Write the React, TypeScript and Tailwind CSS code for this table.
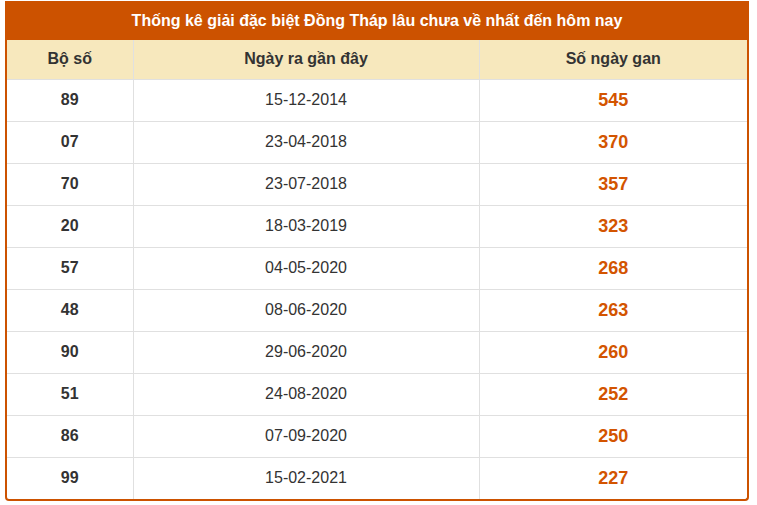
const rows = [
  { so: "89", date: "15-12-2014", gan: 545 },
  { so: "07", date: "23-04-2018", gan: 370 },
  { so: "70", date: "23-07-2018", gan: 357 },
  { so: "20", date: "18-03-2019", gan: 323 },
  { so: "57", date: "04-05-2020", gan: 268 },
  { so: "48", date: "08-06-2020", gan: 263 },
  { so: "90", date: "29-06-2020", gan: 260 },
  { so: "51", date: "24-08-2020", gan: 252 },
  { so: "86", date: "07-09-2020", gan: 250 },
  { so: "99", date: "15-02-2021", gan: 227 },
];

export default function App() {
  return (
    <div className="w-[757px] h-[505px] bg-white pt-px" style={{ fontFamily: '"Liberation Sans", Arial, sans-serif' }}>
      <div className="ml-[5px] w-[744px] border-2 border-t-0 border-[#cc5200] rounded-b-[4px] overflow-hidden">
        {/* Title */}
        <div className="h-[39px] bg-[#cc5200] text-white font-bold text-[16px] flex items-center justify-center">
          Thống kê giải đặc biệt Đồng Tháp lâu chưa về nhất đến hôm nay
        </div>

        <table className="w-full border-collapse table-fixed text-[#333]">
          <colgroup>
            <col className="w-[126px]" />
            <col className="w-[346px]" />
            <col />
          </colgroup>
          <thead>
            <tr className="h-[39px] bg-[#f7e8bd] text-[16px] font-bold">
              <th className="border border-t-0 border-l-0 border-[#e0e0e0]">Bộ số</th>
              <th className="border border-t-0 border-[#e0e0e0]">Ngày ra gần đây</th>
              <th className="border border-t-0 border-r-0 border-[#e0e0e0]">Số ngày gan</th>
            </tr>
          </thead>
          <tbody>
            {rows.map((r, i) => (
              <tr key={r.so} className="h-[42px] text-center">
                <td className={`border border-l-0 border-[#e0e0e0] font-bold text-[16px] ${i === rows.length - 1 ? "border-b-0" : ""}`}>
                  {r.so}
                </td>
                <td className={`border border-[#e0e0e0] text-[16px] ${i === rows.length - 1 ? "border-b-0" : ""}`}>
                  {r.date}
                </td>
                <td className={`border border-r-0 border-[#e0e0e0] font-bold text-[18px] text-[#d35400] ${i === rows.length - 1 ? "border-b-0" : ""}`}>
                  {r.gan}
                </td>
              </tr>
            ))}
          </tbody>
        </table>
      </div>
    </div>
  );
}
